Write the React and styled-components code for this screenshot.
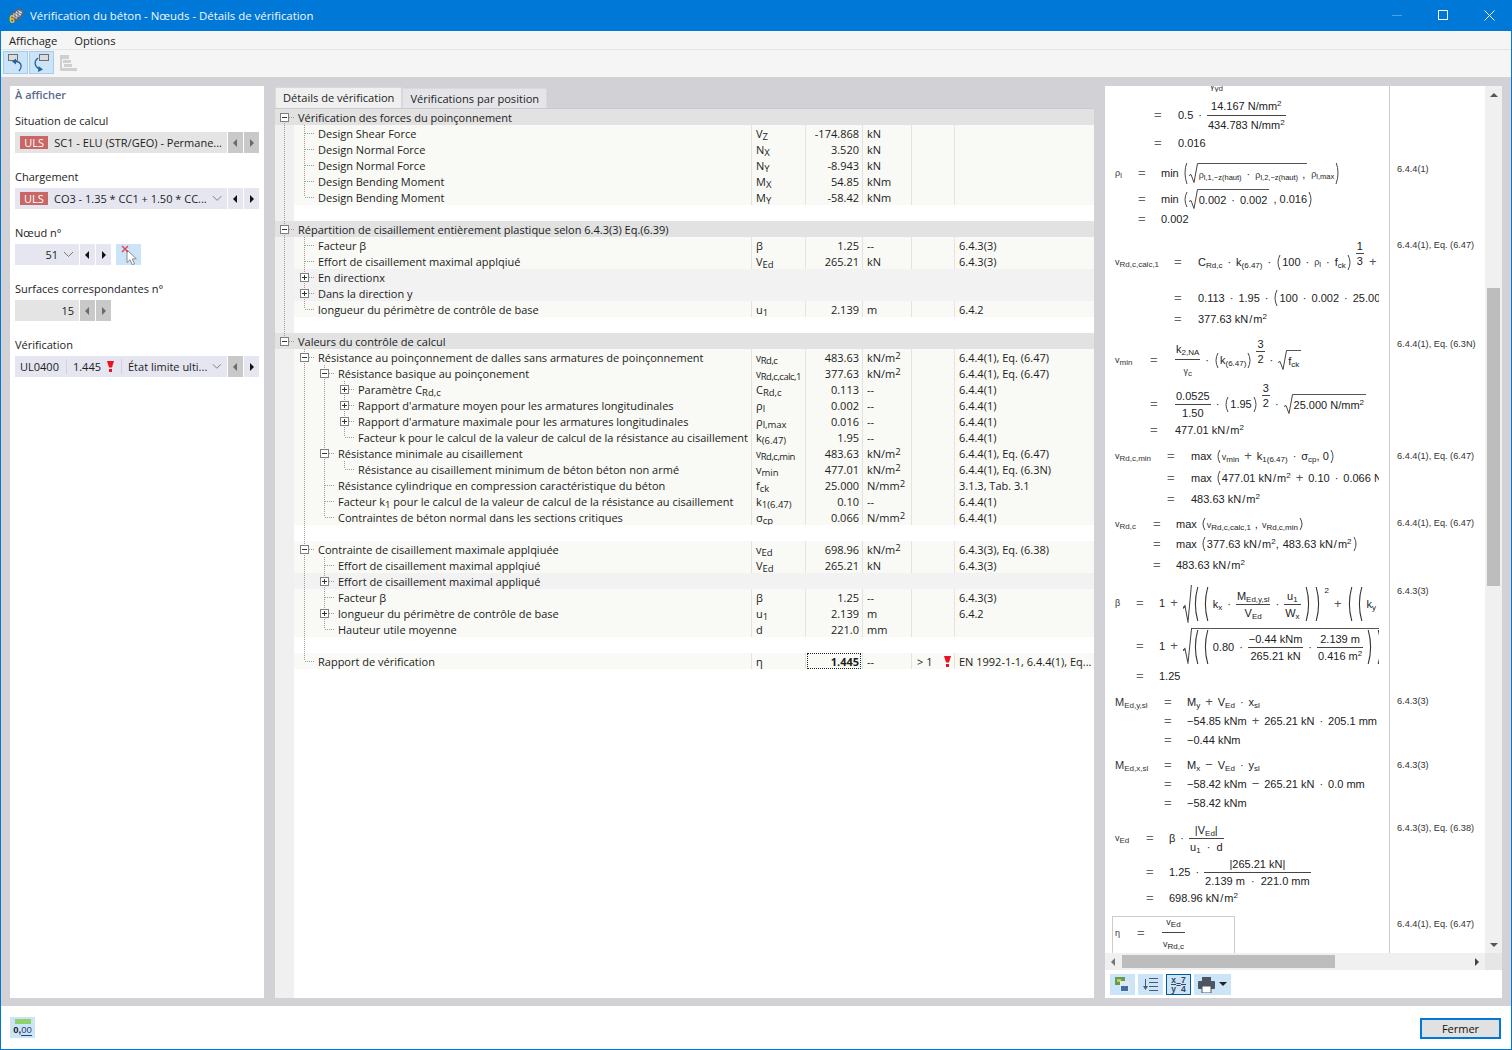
import React from 'react'
import styled, { createGlobalStyle } from 'styled-components'

const UI_FONT = '"Open Sans", "Noto Sans", sans-serif'
const MATH_FONT = '"Liberation Sans", Arial, sans-serif'

const Global = createGlobalStyle`
  html, body { margin: 0; padding: 0; background: #fff; }
  * { box-sizing: border-box; }
`
const Window = styled.div`
  width: 1512px;
  height: 1050px;
  display: flex;
  flex-direction: column;
  border: 1px solid #0078d7;
  border-top: none;
  overflow: hidden;
  font-family: ${UI_FONT};
  font-size: 11px;
  color: #1c1c1c;
`
const TitleBar = styled.div`
  height: 31px;
  flex: none;
  margin: 0 -1px;
  background: #0078d7;
  display: flex;
  align-items: center;
  padding-left: 8px;
  color: #f4f9fd;
  font-size: 11.4px;
`
const TitleText = styled.span`
  margin-left: 5px;
  flex: 1;
`
const WinButton = styled.div`
  width: 46px;
  height: 31px;
  display: flex;
  align-items: center;
  justify-content: center;
`
const MenuBar = styled.div`
  height: 19px;
  flex: none;
  background: #f5f5f5;
  border-bottom: 1px solid #e4e4e4;
  display: flex;
  align-items: center;
  gap: 17px;
  padding-left: 8px;
  font-size: 11.2px;
`
const ToolBar = styled.div`
  height: 27px;
  flex: none;
  background: #f5f5f5;
  display: flex;
  align-items: flex-start;
  padding: 1px 0 0 2px;
  gap: 1px;
`
const ToolButton = styled.div`
  width: 25px;
  height: 23px;
  background: ${(p) => (p.$off ? 'transparent' : '#cce4f7')};
  border: 1px solid ${(p) => (p.$off ? 'transparent' : '#a3cdee')};
  display: flex;
  align-items: center;
  justify-content: center;
`
const Body = styled.div`
  flex: 1;
  min-height: 0;
  background: #d2d1d6;
  display: flex;
  padding: 9px 9px 8px;
  gap: 11px;
`
const SidePanel = styled.div`
  width: 254px;
  background: #fff;
  padding: 1px 5px;
  display: flex;
  flex-direction: column;
`
const SideTitle = styled.div`
  height: 16px;
  line-height: 16px;
  color: #5b6b8c;
  font-weight: 600;
  margin-bottom: 10px;
`
const Field = styled.div`
  margin-bottom: 16px;
`
const FieldLabel = styled.div`
  height: 16px;
  line-height: 16px;
  margin-bottom: 3px;
`
const FieldRow = styled.div`
  display: flex;
  gap: 1px;
  height: 21px;
`
const Select = styled.div`
  width: ${(p) => p.$w || 212}px;
  background: ${(p) => (p.$off ? '#e4e4e4' : '#e6e6f0')};
  display: flex;
  align-items: center;
  padding: 0 5px;
  gap: 5px;
  white-space: nowrap;
  overflow: hidden;
`
const SelectText = styled.span`
  flex: 1;
  text-align: ${(p) => p.$align || 'left'};
`
const Badge = styled.span`
  width: 30px;
  height: 13px;
  line-height: 13px;
  background: #c96666;
  color: #fff;
  text-align: center;
  margin-right: 1px;
`
const StepButton = styled.div`
  width: 15px;
  background: ${(p) => (p.$off ? '#c9c9c9' : '#e6e6f0')};
  display: flex;
  align-items: center;
  justify-content: center;
`
const PickButton = styled.div`
  width: 25px;
  margin-left: 4px;
  background: #cce4f7;
  display: flex;
  align-items: center;
  justify-content: center;
`
const SelectPart = styled.span`
  padding-right: 7px;
  margin-right: 1px;
  border-right: 1px solid #d2d2de;
  display: inline-flex;
  align-items: center;
  gap: 6px;
`
const Center = styled.div`
  width: 819px;
  display: flex;
  flex-direction: column;
`
const Tabs = styled.div`
  height: 22px;
  flex: none;
  display: flex;
  align-items: flex-end;
`
const Tab = styled.div`
  height: ${(p) => (p.$active ? 21 : 20)}px;
  line-height: 20px;
  padding: 0 7px;
  background: ${(p) => (p.$active ? '#f0f0f0' : '#e5e5e9')};
  border: 1px solid #d9d9dd;
  border-bottom: none;
  font-size: 11.1px;
`
const TreePanel = styled.div`
  flex: 1;
  min-height: 0;
  display: flex;
  flex-direction: column;
  border-top: 1px solid #c9c9cf;
  background: linear-gradient(to right, #f0f0f0 19px, #fff 19px);
`
const Row = styled.div`
  height: 16px;
  flex: none;
  display: flex;
  background: ${(p) => (p.$kind === 'group' ? '#e2e2e2' : 'transparent')};
`
const LabelCell = styled.div`
  width: 476px;
  flex: none;
  display: flex;
  white-space: nowrap;
`
const fills = { data: '#f9faf5', sub: '#f2f2f2' }
const RowFill = styled.div`
  flex: 1;
  display: flex;
  background: ${(p) => fills[p.$kind] || 'transparent'};
`
const TreeCol = styled.div`
  width: ${(p) => (p.$first ? 19 : 20)}px;
  flex: none;
  height: 16px;
  display: flex;
  align-items: center;
  justify-content: center;
  background-color: ${(p) => (p.$first ? (p.$kind === 'group' ? 'transparent' : '#f0f0f0') : fills[p.$kind] || 'transparent')};
  background-image: ${(p) => [
    p.$v && 'repeating-linear-gradient(to bottom, #9a9a9a 0 1px, transparent 1px 2px)',
    p.$h && 'repeating-linear-gradient(to right, #9a9a9a 0 1px, transparent 1px 2px)',
  ].filter(Boolean).join(', ') || 'none'};
  background-repeat: no-repeat;
  background-size: ${(p) => [
    p.$v && `1px ${p.$v === 'full' ? '16px' : '8px'}`,
    p.$h && '10px 1px',
  ].filter(Boolean).join(', ') || 'auto'};
  background-position: ${(p) => [
    p.$v && `${p.$first ? 9 : 10}px ${p.$v === 'start' ? '8px' : '0'}`,
    p.$h && `${p.$first ? 10 : 11}px 8px`,
  ].filter(Boolean).join(', ') || '0 0'};
`
const ToggleBox = styled.div`
  width: 9px;
  height: 9px;
  border: 1px solid #7f7f7f;
  background: #fff;
  background-image: linear-gradient(#333, #333)${(p) => (p.$plus ? ', linear-gradient(#333, #333)' : '')};
  background-repeat: no-repeat;
  background-size: 5px 1px${(p) => (p.$plus ? ', 1px 5px' : '')};
  background-position: 1px 3px${(p) => (p.$plus ? ', 3px 1px' : '')};
`
const RowText = styled.span`
  padding: 1px 0 0 4px;
  line-height: 16px;
`
const Cell = styled.div`
  width: ${(p) => p.$w}px;
  flex: ${(p) => (p.$w ? 'none' : 1)};
  border-left: 1px solid #e4e4df;
  padding: 1px ${(p) => (p.$right ? 3 : 0)}px 0 ${(p) => (p.$right ? 0 : 4)}px;
  line-height: 16px;
  white-space: nowrap;
  overflow: hidden;
  display: flex;
  align-items: center;
  justify-content: ${(p) => (p.$right ? 'flex-end' : 'flex-start')};
`
const CellInner = styled.span``
const Focused = styled.span`
  display: block;
  flex: 1;
  height: 16px;
  margin: -1px -2px 0 1px;
  padding: 1px 2px 0 0;
  line-height: 15px;
  text-align: right;
  font-weight: 700;
  outline: 1px dotted #222;
  outline-offset: -1px;
`
const Over = styled.span`
  flex: 1;
  display: flex;
  align-items: center;
  justify-content: space-between;
  padding: 0 3px 0 1px;
`
const S = styled.sub`
  font-size: 9.5px;
  vertical-align: -1.5px;
  line-height: 0;
  letter-spacing: ${(p) => (p.$tight ? '-0.5px' : 0)};
`
const Sup = styled.sup`
  font-size: 9.5px;
  vertical-align: 3px;
  line-height: 0;
`
const SymSmall = styled.span`
  font-size: 10px;
  letter-spacing: -0.3px;
`
const RightPanel = styled.div`
  width: 397px;
  display: flex;
  flex-direction: column;
  background: #fff;
`
const MathArea = styled.div`
  flex: 1;
  min-height: 0;
  display: flex;
`
const MathViewport = styled.div`
  width: 380px;
  overflow: hidden;
  font-family: ${MATH_FONT};
  font-size: 11px;
  color: #222;
`
const Block = styled.div`
  --eq: ${(p) => p.$eq}px;
  --gap: ${(p) => p.$x - p.$eq}px;
  height: ${(p) => p.$h}px;
  display: flex;
`
const FormulaCell = styled.div`
  width: 274px;
  margin-right: 10px;
  flex: none;
  overflow: hidden;
`
const FormulaBox = styled.div`
  --symx: 2px;
  margin: 0 0 0 7px;
  width: 123px;
  height: 60px;
  border: 1px solid #ccc;
`
const RefCell = styled.div`
  flex: 1;
  border-left: 1px solid #ccc;
  padding: ${(p) => p.$top || 0}px 0 0 7px;
  font-size: 9.2px;
  line-height: 12px;
  color: #333;
  white-space: nowrap;
`
const Line = styled.div`
  height: ${(p) => p.$h}px;
  display: grid;
  grid-template-columns: var(--eq) var(--gap) 1fr;
  grid-template-rows: ${(p) => p.$h}px;
  align-items: ${(p) => (p.$end ? 'end' : 'center')};
  white-space: nowrap;
  overflow: ${(p) => (p.$end ? 'hidden' : 'visible')};
`
const LineSym = styled.div`
  padding-left: var(--symx, 10px);
  font-size: ${(p) => (p.$big ? 11 : 9)}px;
  color: #333;
`
const EqSign = styled.div`
  font-size: 13px;
  line-height: 10px;
  color: #666;
`
const Expr = styled.div`
  display: flex;
  align-items: center;
  gap: 4px;
  line-height: 12px;
  padding-left: ${(p) => p.$indent || 0}px;
`
const Tiny = styled.span`
  font-size: 9px;
  color: #333;
`
const Sb = styled.sub`
  font-size: ${(p) => p.$size || 8}px;
  vertical-align: -2px;
  line-height: 0;
`
const Sp = styled.sup`
  font-size: 8px;
  vertical-align: 4px;
  line-height: 0;
`
const RaisedTwo = styled.span`
  font-size: 8px;
  margin-bottom: 26px;
`
const Op = styled.span`
  font-size: 13px;
  line-height: 10px;
  color: #555;
  padding: 0 1px;
`
const Dot = styled.span`
  padding: 0 1px;
`
const Slash = styled.span`
  padding: 0 1px;
`
const Unit = styled.span`
  margin-left: -1px;
`
const FracBox = styled.span`
  display: inline-flex;
  flex-direction: column;
  align-items: stretch;
  text-align: center;
  margin-bottom: ${(p) => p.$raise || 0}px;
`
const FracTop = styled.span`
  padding: 0 1px ${(p) => (p.$pad === undefined ? 3 : p.$pad)}px;
  border-bottom: 1px solid #444;
`
const FracBottom = styled.span`
  padding: ${(p) => (p.$pad === undefined ? 3 : p.$pad)}px 1px 0;
`
const RootBox = styled.span`
  display: inline-flex;
  align-items: stretch;
`
const RootBody = styled.span`
  display: inline-flex;
  align-items: center;
  gap: 4px;
  border-top: 1px solid #555;
  padding: 1px 2px 0 1px;
`
const VScroll = styled.div`
  width: 17px;
  flex: none;
  background: #f0f0f0;
  display: flex;
  flex-direction: column;
  align-items: center;
`
const ScrollArrow = styled.div`
  width: 17px;
  height: 17px;
  flex: none;
  display: flex;
  align-items: center;
  justify-content: center;
`
const VThumb = styled.div`
  width: 13px;
  height: 298px;
  margin-top: 185px;
  background: #bdbdbd;
`
const Grow = styled.div`
  flex: 1;
`
const HScroll = styled.div`
  height: 17px;
  flex: none;
  display: flex;
  background: #f0f0f0;
`
const HThumb = styled.div`
  width: 213px;
  height: 13px;
  margin-top: 2px;
  background: #bdbdbd;
`
const Corner = styled.div`
  width: 17px;
  background: #e6e6e6;
`
const MathTools = styled.div`
  height: 28px;
  flex: none;
  display: flex;
  gap: 3px;
  padding: 4px 5px;
`
const MathTool = styled.div`
  width: ${(p) => p.$w || 25}px;
  height: 21px;
  background: #cce4f7;
  border: ${(p) => (p.$on ? '1px solid #005a9e' : 'none')};
  display: flex;
  align-items: center;
  justify-content: center;
  gap: 4px;
`
const RatioIcon = styled.div`
  display: flex;
  align-items: center;
  font-family: ${MATH_FONT};
  font-size: 8.5px;
  font-weight: 700;
  line-height: 8px;
  color: #33465f;
  text-align: center;
`
const RatioFrac = styled.div`
  display: flex;
  flex-direction: column;
`
const RatioTop = styled.span`
  border-bottom: 1px solid #33465f;
`
const Footer = styled.div`
  height: 43px;
  flex: none;
  background: #fff;
  display: flex;
  align-items: flex-start;
  justify-content: space-between;
  padding: 11px 10px 0 9px;
`
const UnitButton = styled.div`
  width: 25px;
  height: 21px;
  background: #cce4f7;
  display: flex;
  flex-direction: column;
  align-items: center;
  padding-top: 2px;
  font-family: ${MATH_FONT};
  font-size: 9.5px;
  line-height: 11px;
  color: #222;
  font-weight: 700;
`
const Ruler = styled.div`
  width: 16px;
  height: 5px;
  background: #8fd16b;
  flex: none;
`
const Underlined = styled.span`
  border-bottom: 1px solid #2c3e7a;
  color: #2c3e7a;
  font-weight: 400;
`
const CloseButton = styled.button`
  width: 81px;
  height: 21px;
  margin-top: 1px;
  border: 2px solid #0078d7;
  background: #e1e1e1;
  font-family: ${UI_FONT};
  font-size: 11px;
  color: #111;
  padding: 0;
`

const Tri = ({ dir = 'left', color = '#111' }) => {
  const pts = { left: '6,1 6,9 2,5', right: '3,1 3,9 7,5', up: '5,3 9,7 1,7', down: '1,3 9,3 5,7' }
  return (
    <svg width="10" height="10" viewBox="0 0 10 10"><polygon points={pts[dir]} fill={color} /></svg>
  )
}
const Chevron = () => (
  <svg width="11" height="7" viewBox="0 0 11 7" fill="none" stroke="#777"><path d="M1 1l4.5 4.5L10 1" /></svg>
)
const RedMark = () => (
  <svg width="7" height="11" viewBox="0 0 7 11"><polygon points="0,0 7,0 5,6.5 2,6.5" fill="#ea1221" /><rect x="2" y="8" width="3" height="3" fill="#ea1221" /></svg>
)
const AppIcon = () => (
  <svg width="17" height="17" viewBox="0 0 17 17">
    <polygon points="3,7 10,1 16,4 15,9 8,15 3,12" fill="#5c6678" />
    <polygon points="5,7 10,3 14,5 13,8 8,12 5,10" fill="#dfe3e8" />
    <path d="M6 5l6 4M8 3.5l6 4M4 7l6 4M10 2v9M7 4v10" stroke="#3f4a60" strokeWidth=".7" />
    <text x="1" y="16" fontSize="10" fontWeight="700" fontFamily="Liberation Sans" fill="#f5c21c">6</text>
  </svg>
)
const UndoIcon = ({ flip }) => (
  <svg width="23" height="21" viewBox="0 0 23 21" fill="none">
    {flip ? (
      <g>
        <rect x="9.5" y="2.5" width="9" height="6" fill="#dcdcdc" stroke="#6e6e6e" />
        <path d="M8 6C4 9 4 14 9 17" stroke="#25639f" strokeWidth="1.3" />
        <polygon points="8.5,14 13,17.5 8,20" fill="#25639f" />
      </g>
    ) : (
      <g>
        <rect x="4.5" y="2.5" width="9" height="6" fill="#dcdcdc" stroke="#6e6e6e" />
        <path d="M11 9.5C17 9.5 19 14 15 19" stroke="#25639f" strokeWidth="1.3" />
        <polygon points="8,9.5 12,6.5 12,12.5" fill="#25639f" />
      </g>
    )}
  </svg>
)
const TreeIcon = () => (
  <svg width="18" height="18" viewBox="0 0 18 18" fill="#cfcfcf">
    <rect x="1" y="1" width="9" height="4" /><rect x="1" y="5" width="2" height="12" /><rect x="4" y="6" width="8" height="3" />
    <rect x="5" y="10" width="8" height="3" /><rect x="3" y="14" width="15" height="3" />
  </svg>
)
const PickIcon = () => (
  <svg width="20" height="20" viewBox="0 0 20 20">
    <path d="M8 5v12.5l3-2.7 2.3 5 2.2-1-2.2-4.8 4-.3z" fill="#fff" stroke="#8a8a8a" />
    <path d="M3 1l6 6M9 1L3 7" stroke="#e0424a" strokeWidth="1.4" />
  </svg>
)
const Delim = ({ h = 16, right, loose }) => (
  <svg
    width={loose ? 6 : 5}
    height={h}
    viewBox={`0 0 5 ${h}`}
    preserveAspectRatio="none"
    fill="none"
    stroke="#333"
    strokeWidth=".9"
    style={{ flex: 'none', margin: loose ? 0 : right ? '0 0 0 -3px' : '0 -3px 0 0' }}
  >
    <path d={right ? `M1 0Q5 ${h / 2} 1 ${h}` : `M4 0Q0 ${h / 2} 4 ${h}`} />
  </svg>
)
const Root = ({ children }) => (
  <RootBox>
    <svg width="9" viewBox="0 0 9 20" preserveAspectRatio="none" fill="none" stroke="#444" style={{ flex: 'none' }}>
      <path d="M0 12.5l2-1 3 8L8.5 .5H9" />
    </svg>
    <RootBody>{children}</RootBody>
  </RootBox>
)
const Frac = ({ n, d, pad, raise }) => (
  <FracBox $raise={raise}>
    <FracTop $pad={pad}>{n}</FracTop>
    <FracBottom $pad={pad}>{d}</FracBottom>
  </FracBox>
)
const V = ({ s }) => <span><Tiny>v</Tiny><Sb>{s}</Sb></span>
const Rho = ({ s }) => <span><Tiny>ρ</Tiny><Sb $size={7.5}>{s}</Sb></span>
const D = () => <Dot>·</Dot>
const Qty = ({ v: value, u }) => (
  <span>{value} kN<Slash>/</Slash>m<Sp>2</Sp></span>
)

const v = (sub) => <SymSmall>v<S $tight>{sub}</S></SymSmall>
const m2 = <>kN/m<Sup>2</Sup></>
const nmm2 = <>N/mm<Sup>2</Sup></>

const tree = [
  {
    label: 'Vérification des forces du poinçonnement', kind: 'group', box: 'minus',
    kids: [
      { label: 'Design Shear Force', sym: <>V<S>Z</S></>, val: '-174.868', unit: 'kN' },
      { label: 'Design Normal Force', sym: <>N<S>X</S></>, val: '3.520', unit: 'kN' },
      { label: 'Design Normal Force', sym: <>N<S>Y</S></>, val: '-8.943', unit: 'kN' },
      { label: 'Design Bending Moment', sym: <>M<S>X</S></>, val: '54.85', unit: 'kNm' },
      { label: 'Design Bending Moment', sym: <>M<S>Y</S></>, val: '-58.42', unit: 'kNm' },
    ],
  },
  { blank: true },
  {
    label: 'Répartition de cisaillement entièrement plastique selon 6.4.3(3) Eq.(6.39)', kind: 'group', box: 'minus',
    kids: [
      { label: 'Facteur β', sym: 'β', val: '1.25', unit: '--', ref: '6.4.3(3)' },
      { label: 'Effort de cisaillement maximal applqiué', sym: <>V<S>Ed</S></>, val: '265.21', unit: 'kN', ref: '6.4.3(3)' },
      { label: 'En directionx', kind: 'sub', box: 'plus' },
      { label: 'Dans la direction y', kind: 'sub', box: 'plus' },
      { label: 'longueur du périmètre de contrôle de base', sym: <>u<S>1</S></>, val: '2.139', unit: 'm', ref: '6.4.2' },
    ],
  },
  { blank: true },
  {
    label: 'Valeurs du contrôle de calcul', kind: 'group', box: 'minus',
    kids: [
      {
        label: 'Résistance au poinçonnement de dalles sans armatures de poinçonnement', box: 'minus',
        sym: v('Rd,c'), val: '483.63', unit: m2, ref: '6.4.4(1), Eq. (6.47)',
        kids: [
          {
            label: 'Résistance basique au poinçonement', box: 'minus',
            sym: v('Rd,c,calc,1'), val: '377.63', unit: m2, ref: '6.4.4(1), Eq. (6.47)',
            kids: [
              { label: <>Paramètre C<S>Rd,c</S></>, box: 'plus', sym: <>C<S>Rd,c</S></>, val: '0.113', unit: '--', ref: '6.4.4(1)' },
              { label: "Rapport d'armature moyen pour les armatures longitudinales", box: 'plus', sym: <>ρ<S>l</S></>, val: '0.002', unit: '--', ref: '6.4.4(1)' },
              { label: "Rapport d'armature maximale pour les armatures longitudinales", box: 'plus', sym: <>ρ<S>l,max</S></>, val: '0.016', unit: '--', ref: '6.4.4(1)' },
              { label: 'Facteur k pour le calcul de la valeur de calcul de la résistance au cisaillement', sym: <>k<S>(6.47)</S></>, val: '1.95', unit: '--', ref: '6.4.4(1)' },
            ],
          },
          {
            label: 'Résistance minimale au cisaillement', box: 'minus',
            sym: v('Rd,c,min'), val: '483.63', unit: m2, ref: '6.4.4(1), Eq. (6.47)',
            kids: [
              { label: 'Résistance au cisaillement minimum de béton béton non armé', sym: <>v<S>min</S></>, val: '477.01', unit: m2, ref: '6.4.4(1), Eq. (6.3N)' },
            ],
          },
          { label: 'Résistance cylindrique en compression caractéristique du béton', sym: <>f<S>ck</S></>, val: '25.000', unit: nmm2, ref: '3.1.3, Tab. 3.1' },
          { label: <>Facteur k<S>1</S> pour le calcul de la valeur de calcul de la résistance au cisaillement</>, sym: <>k<S>1(6.47)</S></>, val: '0.10', unit: '--', ref: '6.4.4(1)' },
          { label: 'Contraintes de béton normal dans les sections critiques', sym: <>σ<S>cp</S></>, val: '0.066', unit: nmm2, ref: '6.4.4(1)' },
        ],
      },
      { blank: true },
      {
        label: 'Contrainte de cisaillement maximale applqiuée', box: 'minus',
        sym: <>v<S>Ed</S></>, val: '698.96', unit: m2, ref: '6.4.3(3), Eq. (6.38)',
        kids: [
          { label: 'Effort de cisaillement maximal applqiué', sym: <>V<S>Ed</S></>, val: '265.21', unit: 'kN', ref: '6.4.3(3)' },
          { label: 'Effort de cisaillement maximal appliqué', kind: 'sub', box: 'plus' },
          { label: 'Facteur β', sym: 'β', val: '1.25', unit: '--', ref: '6.4.3(3)' },
          { label: 'longueur du périmètre de contrôle de base', box: 'plus', sym: <>u<S>1</S></>, val: '2.139', unit: 'm', ref: '6.4.2' },
          { label: 'Hauteur utile moyenne', sym: 'd', val: '221.0', unit: 'mm' },
        ],
      },
      { blank: true },
      { label: 'Rapport de vérification', sym: 'η', val: '1.445', focused: true, unit: '--', over: true, ref: 'EN 1992-1-1, 6.4.4(1), Eq...' },
    ],
  },
]

const flatten = (list, level = 0, guides = []) =>
  list.flatMap((node, i) => {
    const last = i === list.length - 1
    const conn = last ? 'end' : level === 0 && i === 0 ? 'start' : 'full'
    const kids = node.kids ? flatten(node.kids, level + 1, [...guides, !last]) : []
    return [{ ...node, level, guides, conn }, ...kids]
  })

const rows = flatten(tree)

const TreeRow = ({ row }) => {
  const kind = row.blank ? 'blank' : row.kind || 'data'
  return (
    <Row $kind={kind}>
      <LabelCell>
        {row.guides.map((on, i) => (
          <TreeCol key={i} $first={i === 0} $kind={kind} $v={on ? 'full' : null} />
        ))}
        <TreeCol $first={row.level === 0} $kind={kind} $v={row.conn} $h={!row.blank}>
          {row.box && <ToggleBox $plus={row.box === 'plus'} />}
        </TreeCol>
        {!row.blank && (
          <RowFill $kind={kind}>
            <RowText>{row.label}</RowText>
          </RowFill>
        )}
      </LabelCell>
      {kind === 'data' ? (
        <RowFill $kind="data">
          <Cell $w={54}><CellInner>{row.sym}</CellInner></Cell>
          <Cell $w={57} $right>
            {row.focused ? <Focused>{row.val}</Focused> : row.val}
          </Cell>
          <Cell $w={49}><CellInner>{row.unit}</CellInner></Cell>
          <Cell $w={43}>{row.over && <Over><span>&gt; 1</span><RedMark /></Over>}</Cell>
          <Cell>{row.ref}</Cell>
        </RowFill>
      ) : (
        <RowFill $kind={kind} />
      )}
    </Row>
  )
}

const F = ({ h, sym, big, children }) => (
  <Line $h={h}>
    <LineSym $big={big}>{sym}</LineSym>
    <EqSign>=</EqSign>
    <Expr>{children}</Expr>
  </Line>
)

const Formulas = () => (
  <MathViewport>
    <Block $h={77} $eq={49} $x={73}>
      <FormulaCell>
        <Line $h={6} $end>
          <span />
          <span />
          <Expr $indent={32}><Tiny>γ<Sb>yd</Sb></Tiny></Expr>
        </Line>
        <F h={46}>0.5 <D /> <Frac n={<>14.167 N/mm<Sp>2</Sp></>} d={<>434.783 N/mm<Sp>2</Sp></>} /></F>
        <F h={10}>0.016</F>
      </FormulaCell>
      <RefCell />
    </Block>

    <Block $h={76} $eq={33} $x={56}>
      <FormulaCell>
        <F h={20} sym={<Rho s="l" />}>
          min <Delim h={22} />
          <Root>
            <Rho s="l,1,−z(haut)" /> <D /> <Rho s="l,2,−z(haut)" /><span>,</span>
          </Root>
          <Rho s="l,max" /><Delim h={22} right />
        </F>
        <F h={32}>min <Delim h={15} /><Root>0.002 <D /> 0.002</Root><span>, 0.016</span><Delim h={15} right /></F>
        <F h={8}>0.002</F>
      </FormulaCell>
      <RefCell>6.4.4(1)</RefCell>
    </Block>

    <Block $h={99} $eq={69} $x={93}>
      <FormulaCell>
        <F h={46} sym={<V s="Rd,c,calc,1" />}>
          <span>C<Sb>Rd,c</Sb></span> <D /> <span>k<Sb>(6.47)</Sb></span> <D /> <Delim h={15} />100 <D /> <Tiny>ρ<Sb>l</Sb></Tiny> <D /> <span>f<Sb>ck</Sb></span><Delim h={15} right />
          <Frac n="1" d="3" pad={1} raise={18} /> <Op>+</Op>
        </F>
        <F h={26}>0.113 <D /> 1.95 <D /> <Delim h={16} />100 <D /> 0.002 <D /> 25.000</F>
        <F h={16}><Qty v="377.63" /></F>
      </FormulaCell>
      <RefCell>6.4.4(1), Eq. (6.47)</RefCell>
    </Block>

    <Block $h={112} $eq={45} $x={70}>
      <FormulaCell>
        <F h={44} sym={<V s="min" />}>
          <Frac n={<span>k<Sb>2,NA</Sb></span>} d={<Tiny>γ<Sb>c</Sb></Tiny>} pad={4} /> <D /> <Delim h={15} /><span>k<Sb>(6.47)</Sb></span><Delim h={15} right />
          <Frac n="3" d="2" pad={1} raise={18} /> <D /> <Root><span>f<Sb>ck</Sb></span></Root>
        </F>
        <F h={44}>
          <Frac n="0.0525" d="1.50" pad={2} /> <D /> <Delim h={15} />1.95<Delim h={15} right />
          <Frac n="3" d="2" pad={1} raise={18} /> <D /> <Root><span>25.000 N/mm<Sp>2</Sp></span></Root>
        </F>
        <F h={8}><Qty v="477.01" /></F>
      </FormulaCell>
      <RefCell>6.4.4(1), Eq. (6.3N)</RefCell>
    </Block>

    <Block $h={67} $eq={62} $x={86}>
      <FormulaCell>
        <F h={12} sym={<V s="Rd,c,min" />}>
          max <Delim h={13} /><V s="min" /> <Op>+</Op> <span>k<Sb>1(6.47)</Sb></span> <D /> <span>σ<Sb>cp</Sb>, 0</span><Delim h={13} right />
        </F>
        <F h={32}>max <Delim h={14} /><Qty v="477.01" /> <Op>+</Op> 0.10 <D /> 0.066 N/mm</F>
        <F h={10}><Qty v="483.63" /></F>
      </FormulaCell>
      <RefCell>6.4.4(1), Eq. (6.47)</RefCell>
    </Block>

    <Block $h={68} $eq={48} $x={71}>
      <FormulaCell>
        <F h={14} sym={<V s="Rd,c" />}>max <Delim h={12} /><V s="Rd,c,calc,1" /><span>,</span> <V s="Rd,c,min" /><Delim h={12} right /></F>
        <F h={26}>max <Delim h={14} /><span><Qty v="377.63" />,</span> <Qty v="483.63" /><Delim h={14} right /></F>
        <F h={16}><Qty v="483.63" /></F>
      </FormulaCell>
      <RefCell>6.4.4(1), Eq. (6.47)</RefCell>
    </Block>

    <Block $h={110} $eq={31} $x={54}>
      <FormulaCell>
        <F h={36} sym={<Tiny>β</Tiny>}>
          1 <Op>+</Op>
          <Root>
            <Delim h={34} loose /><Delim h={34} loose />
            <span>k<Sb>x</Sb></span> <D />
            <Frac n={<span>M<Sb>Ed,y,sl</Sb></span>} d={<span>V<Sb>Ed</Sb></span>} pad={2} /> <D />
            <Frac n={<span>u<Sb>1</Sb></span>} d={<span>W<Sb>x</Sb></span>} pad={2} />
            <Delim h={34} right loose /><Delim h={34} right loose /><RaisedTwo>2</RaisedTwo>
            <Op>+</Op>
            <Delim h={34} loose /><Delim h={34} loose /><span>k<Sb>y</Sb></span>
          </Root>
        </F>
        <F h={50}>
          1 <Op>+</Op>
          <Root>
            <Delim h={34} loose /><Delim h={34} loose />0.80 <D />
            <Frac n="−0.44 kNm" d="265.21 kN" pad={2} /> <D />
            <Frac n="2.139 m" d={<>0.416 m<Sp>2</Sp></>} pad={2} />
            <Delim h={34} right loose /><Delim h={34} right loose />
          </Root>
        </F>
        <F h={10}>1.25</F>
      </FormulaCell>
      <RefCell>6.4.3(3)</RefCell>
    </Block>

    <Block $h={64} $eq={59} $x={82}>
      <FormulaCell>
        <F h={14} big sym={<>M<Sb>Ed,y,sl</Sb></>}><span>M<Sb>y</Sb></span> <Op>+</Op> <span>V<Sb>Ed</Sb></span> <D /> <span>x<Sb>sl</Sb></span></F>
        <F h={24}>−54.85 kNm <Op>+</Op> 265.21 kN <D /> 205.1 mm</F>
        <F h={14}>−0.44 kNm</F>
      </FormulaCell>
      <RefCell>6.4.3(3)</RefCell>
    </Block>

    <Block $h={63} $eq={59} $x={82}>
      <FormulaCell>
        <F h={12} big sym={<>M<Sb>Ed,x,sl</Sb></>}><span>M<Sb>x</Sb></span> <Op>−</Op> <span>V<Sb>Ed</Sb></span> <D /> <span>y<Sb>sl</Sb></span></F>
        <F h={26}>−58.42 kNm <Op>−</Op> 265.21 kN <D /> 0.0 mm</F>
        <F h={12}>−58.42 kNm</F>
      </FormulaCell>
      <RefCell>6.4.3(3)</RefCell>
    </Block>

    <Block $h={94} $eq={41} $x={64}>
      <FormulaCell>
        <F h={32} sym={<V s="Ed" />}><span>β</span> <D /> <Frac n={<>|V<Sb>Ed</Sb>|</>} d={<>u<Sb>1</Sb> &nbsp;·&nbsp; d</>} pad={2} /></F>
        <F h={36}>1.25 <D /> <Frac n="|265.21 kN|" d={'2.139 m \u00a0·\u00a0 221.0 mm'} pad={2} /></F>
        <F h={16}><Qty v="698.96" /></F>
      </FormulaCell>
      <RefCell>6.4.3(3), Eq. (6.38)</RefCell>
    </Block>

    <Block $h={60} $eq={24} $x={49}>
      <FormulaCell>
        <FormulaBox>
          <F h={31} sym={<Tiny>η</Tiny>}><Frac n={<V s="Ed" />} d={<V s="Rd,c" />} pad={4} /></F>
        </FormulaBox>
      </FormulaCell>
      <RefCell $top={2}>6.4.4(1), Eq. (6.47)</RefCell>
    </Block>
  </MathViewport>
)

export default function App() {
  return (
    <Window>
      <Global />
      <TitleBar>
        <AppIcon />
        <TitleText>Vérification du béton - Nœuds - Détails de vérification</TitleText>
        <WinButton>
          <svg width="10" height="1"><rect width="10" height="1" fill="#4aa3e8" /></svg>
        </WinButton>
        <WinButton>
          <svg width="11" height="11" fill="none" stroke="#fff"><rect x=".5" y=".5" width="9" height="9" /></svg>
        </WinButton>
        <WinButton>
          <svg width="11" height="11" fill="none" stroke="#fff"><path d="M.5.5l10 10M10.5.5l-10 10" /></svg>
        </WinButton>
      </TitleBar>
      <MenuBar>
        <span>Affichage</span>
        <span>Options</span>
      </MenuBar>
      <ToolBar>
        <ToolButton><UndoIcon /></ToolButton>
        <ToolButton><UndoIcon flip /></ToolButton>
        <ToolButton $off><TreeIcon /></ToolButton>
      </ToolBar>
      <Body>
        <SidePanel>
          <SideTitle>À afficher</SideTitle>
          <Field>
            <FieldLabel>Situation de calcul</FieldLabel>
            <FieldRow>
              <Select $off><Badge>ULS</Badge><SelectText>SC1 - ELU (STR/GEO) - Permane...</SelectText></Select>
              <StepButton $off><Tri dir="left" color="#6a6a6a" /></StepButton>
              <StepButton $off><Tri dir="right" color="#6a6a6a" /></StepButton>
            </FieldRow>
          </Field>
          <Field>
            <FieldLabel>Chargement</FieldLabel>
            <FieldRow>
              <Select><Badge>ULS</Badge><SelectText>CO3 - 1.35 * CC1 + 1.50 * CC...</SelectText><Chevron /></Select>
              <StepButton><Tri dir="left" /></StepButton>
              <StepButton><Tri dir="right" /></StepButton>
            </FieldRow>
          </Field>
          <Field>
            <FieldLabel>Nœud n°</FieldLabel>
            <FieldRow>
              <Select $w={64}><SelectText $align="right">51</SelectText><Chevron /></Select>
              <StepButton><Tri dir="left" /></StepButton>
              <StepButton><Tri dir="right" /></StepButton>
              <PickButton><PickIcon /></PickButton>
            </FieldRow>
          </Field>
          <Field>
            <FieldLabel>Surfaces correspondantes n°</FieldLabel>
            <FieldRow>
              <Select $w={64} $off><SelectText $align="right">15</SelectText></Select>
              <StepButton $off><Tri dir="left" color="#6a6a6a" /></StepButton>
              <StepButton $off><Tri dir="right" color="#6a6a6a" /></StepButton>
            </FieldRow>
          </Field>
          <Field>
            <FieldLabel>Vérification</FieldLabel>
            <FieldRow>
              <Select>
                <SelectPart>UL0400</SelectPart>
                <SelectPart>1.445 <RedMark /></SelectPart>
                <SelectText>État limite ulti...</SelectText>
                <Chevron />
              </Select>
              <StepButton $off><Tri dir="left" color="#6a6a6a" /></StepButton>
              <StepButton><Tri dir="right" /></StepButton>
            </FieldRow>
          </Field>
        </SidePanel>

        <Center>
          <Tabs>
            <Tab $active>Détails de vérification</Tab>
            <Tab>Vérifications par position</Tab>
          </Tabs>
          <TreePanel>
            {rows.map((row, i) => (
              <TreeRow key={i} row={row} />
            ))}
          </TreePanel>
        </Center>

        <RightPanel>
          <MathArea>
            <Formulas />
            <VScroll>
              <ScrollArrow><Tri dir="up" color="#555" /></ScrollArrow>
              <VThumb />
              <Grow />
              <ScrollArrow><Tri dir="down" color="#555" /></ScrollArrow>
            </VScroll>
          </MathArea>
          <HScroll>
            <ScrollArrow><Tri dir="left" color="#777" /></ScrollArrow>
            <HThumb />
            <Grow />
            <ScrollArrow><Tri dir="right" color="#444" /></ScrollArrow>
            <Corner />
          </HScroll>
          <MathTools>
            <MathTool>
              <svg width="17" height="17" viewBox="0 0 17 17">
                <rect x="1" y="1" width="10" height="8" fill="#5f9e55" />
                <rect x="3" y="3" width="4" height="3" fill="#d9c24a" />
                <rect x="6" y="5" width="10" height="11" fill="#dfe7ef" />
                <rect x="7" y="10" width="7" height="5" fill="#3f6fa8" />
              </svg>
            </MathTool>
            <MathTool>
              <svg width="15" height="15" viewBox="0 0 15 15" fill="none" stroke="#4a5a70">
                <path d="M6 1.5h9M6 5.5h9M6 9.5h9M6 13.5h9M2.5 2v9" />
                <polygon points="0,9 5,9 2.5,13" fill="#4a5a70" stroke="none" />
              </svg>
            </MathTool>
            <MathTool $on>
              <RatioIcon>
                <RatioFrac><RatioTop>x</RatioTop><span>y</span></RatioFrac>=
                <RatioFrac><RatioTop>7</RatioTop><span>4</span></RatioFrac>
              </RatioIcon>
            </MathTool>
            <MathTool $w={37}>
              <svg width="17" height="16" viewBox="0 0 17 16">
                <rect x="4" y="0" width="9" height="4" fill="#4c5560" />
                <rect x="0" y="4" width="17" height="8" rx="1" fill="#4c5560" />
                <rect x="4" y="9" width="9" height="7" fill="#fff" stroke="#4c5560" />
              </svg>
              <svg width="8" height="5"><polygon points="0,0 8,0 4,4" fill="#222" /></svg>
            </MathTool>
          </MathTools>
        </RightPanel>
      </Body>
      <Footer>
        <UnitButton>
          <Ruler />
          <span>0,<Underlined>00</Underlined></span>
        </UnitButton>
        <CloseButton>Fermer</CloseButton>
      </Footer>
    </Window>
  )
}
